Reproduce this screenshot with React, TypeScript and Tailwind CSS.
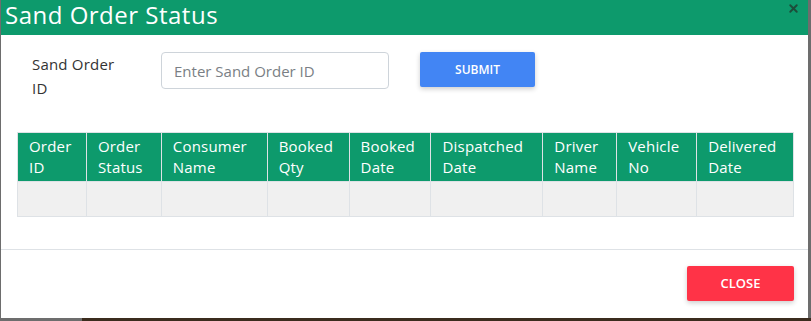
import { X } from 'lucide-react';

const columns = [
  { label: 'Order ID', w: 'w-[68px]' },
  { label: 'Order Status', w: 'w-[75px]' },
  { label: 'Consumer Name', w: 'w-[106px]' },
  { label: 'Booked Qty', w: 'w-[82px]' },
  { label: 'Booked Date', w: 'w-[82px]' },
  { label: 'Dispatched Date', w: 'w-[112px]' },
  { label: 'Driver Name', w: 'w-[74px]' },
  { label: 'Vehicle No', w: 'w-[80px]' },
  { label: 'Delivered Date', w: 'w-[97px]' },
];

export default function App() {
  return (
    <div className="w-[811px] h-[321px] bg-[#3b2c1e] overflow-hidden" style={{ fontFamily: '"Open Sans", "Liberation Sans", sans-serif' }}>
      <div className="flex h-[318px]">
        <div className="w-[1px] bg-[#6d6d6d]" />
        <div className="w-[807px] bg-white flex flex-col">
          {/* header */}
          <div className="h-[35px] bg-[#0d9a6c] flex items-start justify-between pl-[4px] pr-[8px]">
            <h2 className="text-white text-[24px] leading-[29px] tracking-[0.5px]">Sand Order Status</h2>
            <button className="text-[#1d4d3a] mt-[2px]">
              <X size={13} strokeWidth={3.5} />
            </button>
          </div>

          {/* form */}
          <div className="flex items-start pl-[31px] pt-[17px]">
            <label className="w-[95px] text-[15px] leading-[24px] text-[#333] tracking-[0.2px]">
              Sand Order
              <br />
              ID
            </label>
            <input
              placeholder="Enter Sand Order ID"
              className="ml-[34px] w-[228px] h-[37px] border border-[#ced4da] rounded-[4px] px-[12px] text-[15px] text-[#495057] placeholder:text-[#7a7f85] outline-none"
            />
            <button className="ml-[31px] w-[115px] h-[35px] bg-[#4285f4] text-white text-[12px] font-semibold rounded-[2px] shadow-[0_2px_5px_rgba(0,0,0,0.2)]">
              SUBMIT
            </button>
          </div>

          {/* table */}
          <div className="mt-[32px] ml-[16px] w-[777px] border border-[#dee2e6]">
            <div className="flex bg-[#0d9a6c]">
              {columns.map((c, i) => (
                <div
                  key={c.label}
                  className={`${c.w} h-[48px] px-[11px] pt-[3px] text-white text-[15px] leading-[21px] tracking-[0.2px] ${i > 0 ? 'border-l border-[#dee2e6]' : ''}`}
                >
                  {c.label.split(' ').map((p) => (
                    <div key={p}>{p}</div>
                  ))}
                </div>
              ))}
            </div>
            <div className="flex bg-[#f0f0f0] border-t border-[#dee2e6]">
              {columns.map((c, i) => (
                <div key={c.label} className={`${c.w} h-[34px] ${i > 0 ? 'border-l border-[#dee2e6]' : ''}`} />
              ))}
            </div>
          </div>

          {/* footer */}
          <div className="mt-[32px] border-t border-[#dee2e6] flex justify-end pr-[14px] pt-[16px]">
            <button className="w-[107px] h-[35px] bg-[#ff3347] text-white text-[13px] font-semibold rounded-[2px] shadow-[0_2px_5px_rgba(0,0,0,0.2)]">
              CLOSE
            </button>
          </div>
        </div>
        <div className="w-[3px] bg-[#6d6d6d]" />
      </div>
      <div className="h-[3px] flex">
        <div className="w-[82px] bg-[#6d6d6d]" />
      </div>
    </div>
  );
}
